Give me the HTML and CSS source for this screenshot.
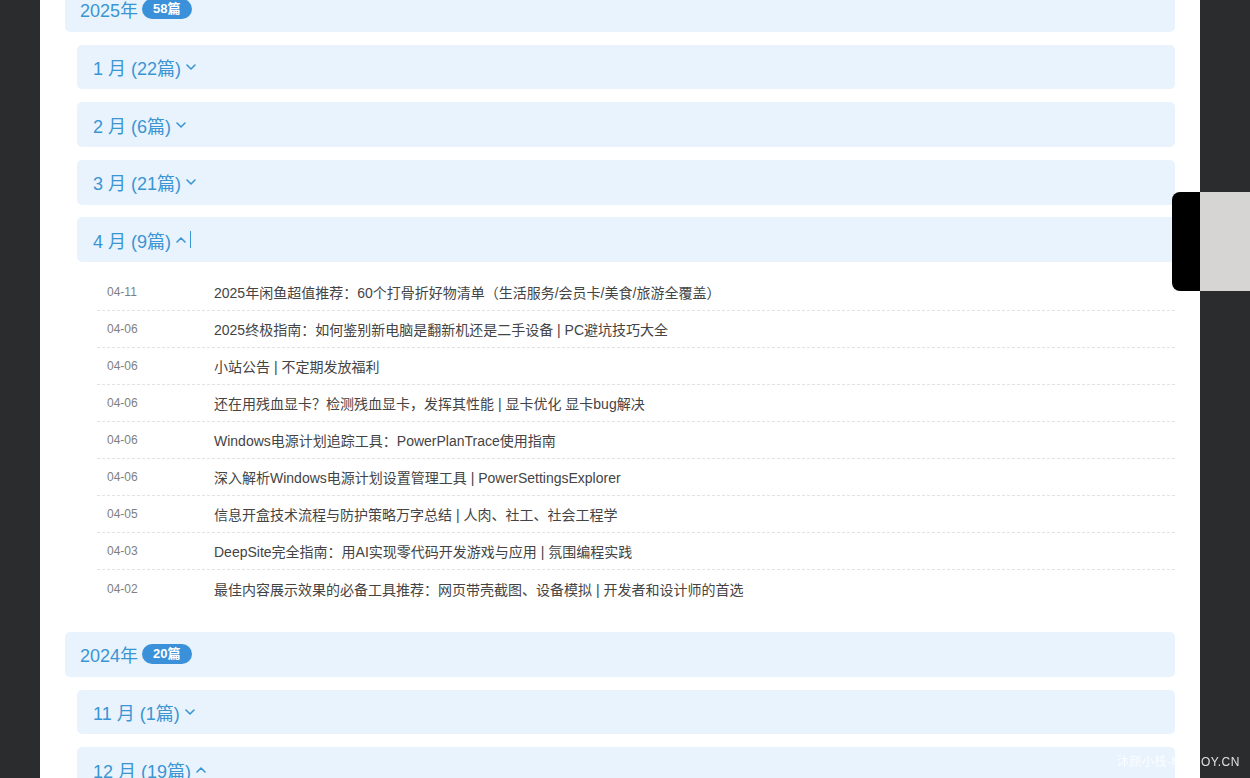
FILE: index.html
```html
<!DOCTYPE html>
<html lang="zh-CN">
<head>
    <meta charset="UTF-8">
    <meta name="viewport" content="width=device-width, initial-scale=1.0">
    <title>文章归档 - 沐颜小栈</title>
    <link rel="stylesheet" href="styles.css">
</head>
<body>

    <div class="page">
        <div class="archive">

            <div class="year-head">2025年 <span class="badge">58篇</span></div>

            <div class="month-head">1 月 (22篇) <svg class="chev" viewBox="0 0 10 6"><polyline points="1,1 5,5 9,1"/></svg></div>
            <div class="month-head">2 月 (6篇) <svg class="chev" viewBox="0 0 10 6"><polyline points="1,1 5,5 9,1"/></svg></div>
            <div class="month-head">3 月 (21篇) <svg class="chev" viewBox="0 0 10 6"><polyline points="1,1 5,5 9,1"/></svg></div>
            <div class="month-head">4 月 (9篇) <svg class="chev" viewBox="0 0 10 6"><polyline points="1,5 5,1 9,5"/></svg><span class="caret"></span></div>

            <ul class="post-list">
                <li><span class="date">04-11</span><a href="#">2025年闲鱼超值推荐：60个打骨折好物清单（生活服务/会员卡/美食/旅游全覆盖）</a></li>
                <li><span class="date">04-06</span><a href="#">2025终极指南：如何鉴别新电脑是翻新机还是二手设备 | PC避坑技巧大全</a></li>
                <li><span class="date">04-06</span><a href="#">小站公告 | 不定期发放福利</a></li>
                <li><span class="date">04-06</span><a href="#">还在用残血显卡？检测残血显卡，发挥其性能 | 显卡优化 显卡bug解决</a></li>
                <li><span class="date">04-06</span><a href="#">Windows电源计划追踪工具：PowerPlanTrace使用指南</a></li>
                <li><span class="date">04-06</span><a href="#">深入解析Windows电源计划设置管理工具 | PowerSettingsExplorer</a></li>
                <li><span class="date">04-05</span><a href="#">信息开盒技术流程与防护策略万字总结 | 人肉、社工、社会工程学</a></li>
                <li><span class="date">04-03</span><a href="#">DeepSite完全指南：用AI实现零代码开发游戏与应用 | 氛围编程实践</a></li>
                <li><span class="date">04-02</span><a href="#">最佳内容展示效果的必备工具推荐：网页带壳截图、设备模拟 | 开发者和设计师的首选</a></li>
            </ul>

            <div class="year-head">2024年 <span class="badge">20篇</span></div>

            <div class="month-head">11 月 (1篇) <svg class="chev" viewBox="0 0 10 6"><polyline points="1,1 5,5 9,1"/></svg></div>
            <div class="month-head">12 月 (19篇) <svg class="chev" viewBox="0 0 10 6"><polyline points="1,5 5,1 9,5"/></svg></div>

        </div>
    </div>

    <!-- side tab on the right edge -->
    <div class="side-tab">
        <div class="side-tab-handle"></div>
        <div class="side-tab-body"></div>
    </div>

    <div class="watermark">沐颜小栈-MUOOY.CN</div>

</body>
</html>
```

FILE: styles.css
```css
html, body {
    height: 100%;
}

body {
    margin: 0;
    background-color: #2b2c2e;
    font-family: "Liberation Sans", Arial, "Noto Sans CJK SC", sans-serif;
    overflow: hidden;
}

.page {
    width: 1160px;
    margin-left: 40px;
    min-height: 100%;
    background-color: #fff;
    padding: 0 25px;
    box-sizing: border-box;
}

.archive {
    margin-top: -13px; /* page is scrolled a bit */
}

.year-head {
    height: 44.8px;
    display: flex;
    align-items: center;
    padding-left: 15px;
    background-color: #e8f3fd;
    border-radius: 5px;
    color: #3b95d3;
    font-size: 18px;
}

.badge {
    display: inline-block;
    margin-left: 4px;
    padding: 0 11px;
    height: 20px;
    line-height: 20px;
    border-radius: 10px;
    background-color: #3b91d9;
    color: #fff;
    font-size: 13px;
    font-weight: bold;
}

.month-head {
    height: 44.8px;
    display: flex;
    align-items: center;
    margin: 12.8px 0 0 12px;
    padding-left: 16px;
    background-color: #e8f3fd;
    border-radius: 5px;
    color: #3b95d3;
    font-size: 18px;
}

.post-list + .year-head {
    margin-top: 12.8px;
}

.chev {
    width: 10px;
    height: 6px;
    margin-left: 5px;
    fill: none;
    stroke: #3b95d3;
    stroke-width: 1.6;
    stroke-linecap: round;
    stroke-linejoin: round;
}

.caret {
    display: inline-block;
    width: 1px;
    height: 17px;
    margin-left: 4px;
    background-color: #3b95d3;
}

.post-list {
    list-style: none;
    margin: 0 0 0 32px;
    padding: 12px 0;
}

.post-list li {
    display: flex;
    align-items: center;
    height: 37px;
    border-bottom: 1px dashed #e3e3e3;
    box-sizing: border-box;
}

.post-list li:last-child {
    border-bottom: none;
}

.date {
    width: 117px;
    padding-left: 10px;
    box-sizing: border-box;
    font-size: 12px;
    color: #808080;
    flex-shrink: 0;
}

.post-list a {
    color: #444;
    font-size: 14px;
    text-decoration: none;
}

.side-tab {
    position: fixed;
    top: 192px;
    right: 0;
    height: 99px;
    display: flex;
}

.side-tab-handle {
    width: 28px;
    background-color: #000;
    border-radius: 8px 0 0 8px;
}

.side-tab-body {
    width: 50px;
    background-color: #d6d5d3;
}

.watermark {
    position: fixed;
    left: 1117px;
    bottom: 9px;
    font-size: 12px;
    color: rgba(255, 255, 255, 0.85);
    white-space: nowrap;
    letter-spacing: 0.5px;
}
```
